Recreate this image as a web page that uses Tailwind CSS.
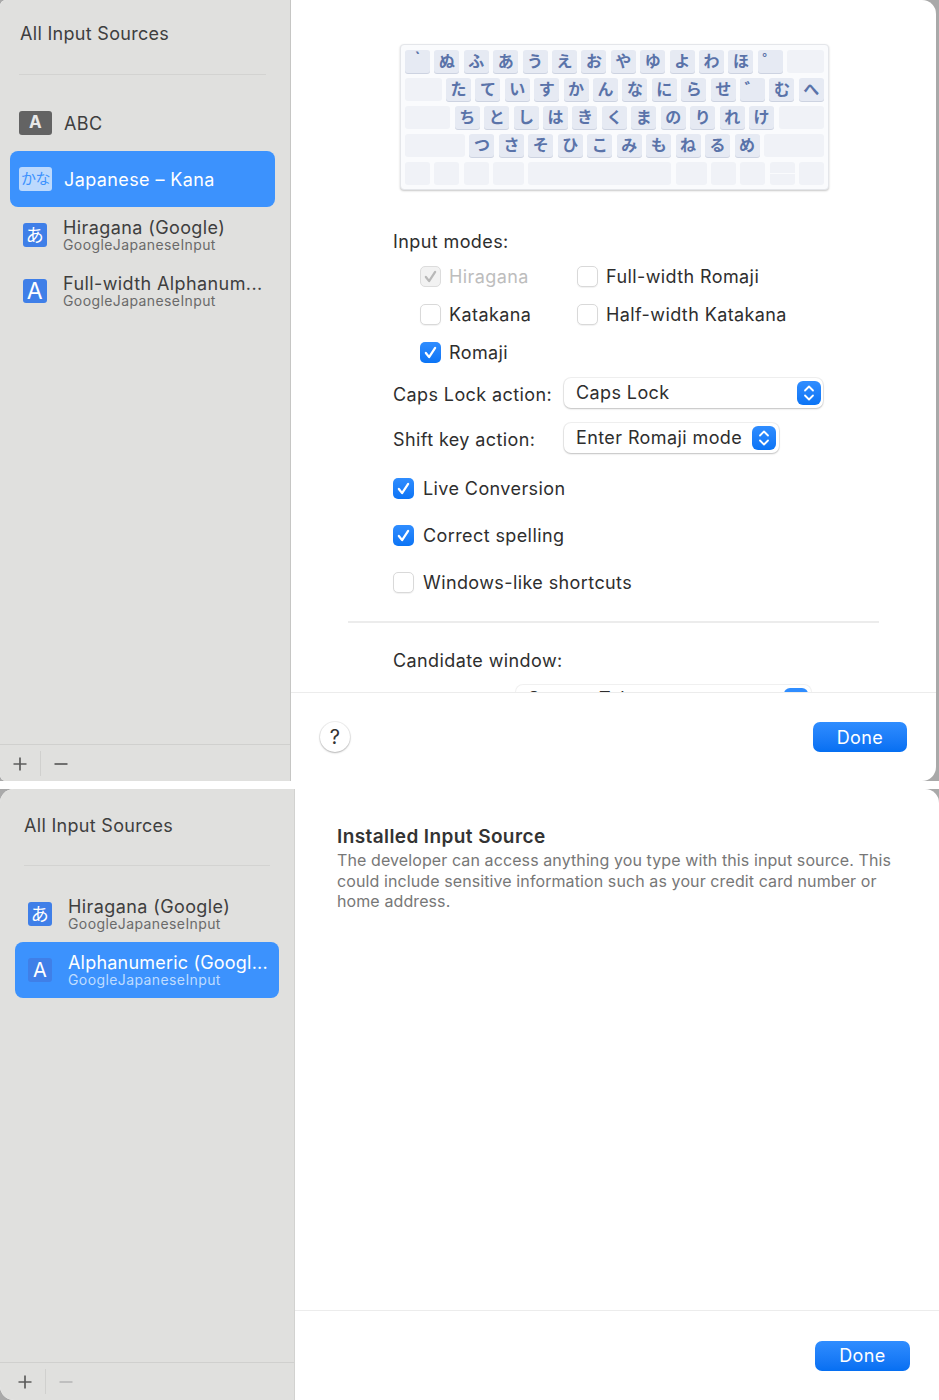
<!doctype html>
<html lang="en">
<head>
<meta charset="utf-8">
<title>Input Sources</title>
<script src="https://cdn.jsdelivr.net/npm/@tailwindcss/browser@4"></script>
</head>
<body class="bg-white font-['Inter','Noto_Sans_CJK_JP',sans-serif] text-[18px] tracking-[0.4px] text-[#2e2e2e] antialiased">

<!-- first sheet -->
<section class="h-[781px] bg-[#a9a9a9] pr-[3px]">
  <div class="flex h-full rounded-l-[6px] rounded-r-[14px] overflow-hidden bg-white">
    <aside class="flex w-[291px] shrink-0 flex-col border-r border-[#c6c6c4] bg-[#e0e0de]">
      <div class="flex h-[74px] items-center pb-[7px] pl-5 tracking-[0.3px] text-[#3e3e3e]">All Input Sources</div>
      <div class="ml-[19px] mr-[24px] h-px bg-[#d3d3d1]"></div>
      <ul class="flex-1 pl-[10px] pr-[15px] pt-[20px]">
        <li class="flex h-[56px] items-center pl-[9px]">
          <span class="flex h-[24px] w-[33px] items-center justify-center rounded-[3px] bg-[#636363] text-[17px] font-bold text-[#e8e8e8]">A</span>
          <span class="ml-[12px] text-[#3e3e3e]">ABC</span>
        </li>
        <li class="flex h-[56px] items-center rounded-[8px] bg-[#3c92fd] pl-[9px] text-white">
          <span class="flex h-[24px] w-[33px] items-center justify-center rounded-[3px] bg-[#bcd9fd] text-[15px] tracking-[-0.5px] text-[#3c92fd]">かな</span>
          <span class="ml-[12px]">Japanese – Kana</span>
        </li>
        <li class="flex h-[56px] items-center pl-[13px]">
          <span class="flex h-[24px] w-[24px] items-center justify-center rounded-[3px] bg-[#3f7fe8] text-[18px] text-white">あ</span>
          <div class="ml-[16px] text-[#3e3e3e]">
            <div class="text-[18px] leading-[20px]">Hiragana (Google)</div>
            <div class="text-[14px] leading-[14px] text-[#6a6a6a]">GoogleJapaneseInput</div>
          </div>
        </li>
        <li class="flex h-[56px] items-center pl-[13px]">
          <span class="flex h-[24px] w-[24px] items-center justify-center rounded-[3px] bg-[#3f7fe8] text-[23px] text-white">A</span>
          <div class="ml-[16px] text-[#3e3e3e]">
            <div class="text-[18px] leading-[20px]">Full-width Alphanum...</div>
            <div class="text-[14px] leading-[14px] text-[#6a6a6a]">GoogleJapaneseInput</div>
          </div>
        </li>
      </ul>
      <div class="flex h-[37px] items-center border-t border-[#d0d0ce] pl-[13px] pt-[1px]">
        <svg class="h-[14px] w-[14px]" viewBox="0 0 14 14" fill="none" stroke="#5c5c5c" stroke-width="1.7"><path d="M7 0.5v13M0.5 7h13"/></svg>
        <span class="ml-[13px] h-[25px] w-px bg-[#d0d0ce]"></span>
        <svg class="ml-[13px] h-[14px] w-[14px]" viewBox="0 0 14 14" fill="none" stroke="#5c5c5c" stroke-width="1.7"><path d="M0.5 7h13"/></svg>
      </div>
    </aside>

    <main class="flex min-w-0 flex-1 flex-col">
      <div class="h-[693px] overflow-hidden border-b border-[#ececec]">
        <!-- keyboard -->
        <div class="ml-[109px] mt-[44px] flex h-[146px] w-[429px] flex-col gap-[4.6px] rounded-[4px] border border-[#e4e6ea] bg-[#fafbfd] px-[4px] py-[4.6px] tracking-normal shadow-[0_1px_2px_rgba(0,0,0,0.22)] [&_b]:flex [&_b]:h-[23.4px] [&_b]:w-[25px] [&_b]:shrink-0 [&_b]:items-center [&_b]:justify-center [&_b]:rounded-[3px] [&_b]:bg-[#e6eaf3] [&_b]:text-[16px] [&_b]:font-bold [&_b]:text-[#5a73a9] [&_b]:shadow-[0_1px_0_#cdd3e1] [&_i]:block [&_i]:h-[23.4px] [&_i]:rounded-[3px] [&_i]:bg-[#f0f2f7]">
          <div class="flex justify-between"><b class="pb-[6px]">`</b><b>ぬ</b><b>ふ</b><b>あ</b><b>う</b><b>え</b><b>お</b><b>や</b><b>ゆ</b><b>よ</b><b>わ</b><b>ほ</b><b>゜</b><i class="w-[36.6px]"></i></div>
          <div class="flex justify-between"><i class="w-[36.6px]"></i><b>た</b><b>て</b><b>い</b><b>す</b><b>か</b><b>ん</b><b>な</b><b>に</b><b>ら</b><b>せ</b><b>゛</b><b>む</b><b>へ</b></div>
          <div class="flex justify-between"><i class="w-[45.3px]"></i><b>ち</b><b>と</b><b>し</b><b>は</b><b>き</b><b>く</b><b>ま</b><b>の</b><b>り</b><b>れ</b><b>け</b><i class="w-[45.3px]"></i></div>
          <div class="flex justify-between"><i class="w-[60px]"></i><b>つ</b><b>さ</b><b>そ</b><b>ひ</b><b>こ</b><b>み</b><b>も</b><b>ね</b><b>る</b><b>め</b><i class="w-[60px]"></i></div>
          <div class="flex justify-between">
            <i class="w-[25px]"></i><i class="w-[25px]"></i><i class="w-[25px]"></i><i class="w-[31px]"></i><i class="w-[143px]"></i><i class="w-[31px]"></i><i class="w-[25px]"></i><i class="w-[25px]"></i>
            <span class="flex w-[25px] flex-col gap-px"><span class="h-[11.2px] rounded-t-[3px] bg-[#f0f2f7]"></span><span class="h-[11.2px] rounded-b-[3px] bg-[#f0f2f7]"></span></span>
            <i class="w-[25px]"></i>
          </div>
        </div>

        <div class="pl-[102px]">
          <div class="mt-[41px] h-[22px] leading-[22px]">Input modes:</div>

          <div class="mt-[12px] flex h-[22px] items-center">
            <span class="ml-[27px] flex h-[21px] w-[21px] items-center justify-center rounded-[5px] border border-[#dcdcdc] bg-[#f2f2f2]">
              <svg class="h-[13px] w-[13px]" viewBox="0 0 14 14" fill="none" stroke="#b8b8b8" stroke-width="2.4" stroke-linecap="round" stroke-linejoin="round"><path d="M2 7.5 5.5 12 12 2"/></svg>
            </span>
            <span class="ml-[8px] w-[128px] text-[#bdbdbd]">Hiragana</span>
            <span class="h-[21px] w-[21px] rounded-[5px] border border-[#d9d9d9] bg-white shadow-[0_1px_1px_rgba(0,0,0,0.06)]"></span>
            <span class="ml-[8px]">Full-width Romaji</span>
          </div>
          <div class="mt-[16px] flex h-[22px] items-center">
            <span class="ml-[27px] h-[21px] w-[21px] rounded-[5px] border border-[#d9d9d9] bg-white shadow-[0_1px_1px_rgba(0,0,0,0.06)]"></span>
            <span class="ml-[8px] w-[128px]">Katakana</span>
            <span class="h-[21px] w-[21px] rounded-[5px] border border-[#d9d9d9] bg-white shadow-[0_1px_1px_rgba(0,0,0,0.06)]"></span>
            <span class="ml-[8px]">Half-width Katakana</span>
          </div>
          <div class="mt-[16px] flex h-[22px] items-center">
            <span class="ml-[27px] flex h-[21px] w-[21px] items-center justify-center rounded-[5px] bg-gradient-to-b from-[#2f8dff] to-[#0a74f5]">
              <svg class="h-[13px] w-[13px]" viewBox="0 0 14 14" fill="none" stroke="#fff" stroke-width="2.4" stroke-linecap="round" stroke-linejoin="round"><path d="M2 7.5 5.5 12 12 2"/></svg>
            </span>
            <span class="ml-[8px]">Romaji</span>
          </div>

          <div class="mt-[15px] flex h-[30px] items-center">
            <span class="w-[170px] pt-[2px]">Caps Lock action:</span>
            <div class="ml-[1px] flex h-[30px] w-[259px] items-center justify-between rounded-[7px] bg-white pl-[12px] pr-[2px] shadow-[0_0_0_1px_rgba(0,0,0,0.06),0_1px_2px_rgba(0,0,0,0.2)]">
              <span class="pb-[1px]">Caps Lock</span>
              <span class="flex h-[24px] w-[24px] items-center justify-center rounded-[6px] bg-gradient-to-b from-[#2f8dff] to-[#0a74f5]">
                <svg class="h-[18px] w-[12px]" viewBox="0 0 12 18" fill="none" stroke="#fff" stroke-width="1.8" stroke-linecap="round" stroke-linejoin="round"><path d="M2 6.5 6 2.5l4 4M2 11.5l4 4 4-4"/></svg>
              </span>
            </div>
          </div>
          <div class="mt-[15px] flex h-[30px] items-center">
            <span class="w-[170px] pt-[2px]">Shift key action:</span>
            <div class="ml-[1px] flex h-[30px] w-[215px] items-center justify-between rounded-[7px] bg-white pl-[12px] pr-[3px] shadow-[0_0_0_1px_rgba(0,0,0,0.06),0_1px_2px_rgba(0,0,0,0.2)]">
              <span class="pb-[1px]">Enter Romaji mode</span>
              <span class="flex h-[24px] w-[24px] items-center justify-center rounded-[6px] bg-gradient-to-b from-[#2f8dff] to-[#0a74f5]">
                <svg class="h-[18px] w-[12px]" viewBox="0 0 12 18" fill="none" stroke="#fff" stroke-width="1.8" stroke-linecap="round" stroke-linejoin="round"><path d="M2 6.5 6 2.5l4 4M2 11.5l4 4 4-4"/></svg>
              </span>
            </div>
          </div>

          <div class="mt-[24px] flex h-[22px] items-center">
            <span class="flex h-[21px] w-[21px] items-center justify-center rounded-[5px] bg-gradient-to-b from-[#2f8dff] to-[#0a74f5]">
              <svg class="h-[13px] w-[13px]" viewBox="0 0 14 14" fill="none" stroke="#fff" stroke-width="2.4" stroke-linecap="round" stroke-linejoin="round"><path d="M2 7.5 5.5 12 12 2"/></svg>
            </span>
            <span class="ml-[9px]">Live Conversion</span>
          </div>
          <div class="mt-[25px] flex h-[22px] items-center">
            <span class="flex h-[21px] w-[21px] items-center justify-center rounded-[5px] bg-gradient-to-b from-[#2f8dff] to-[#0a74f5]">
              <svg class="h-[13px] w-[13px]" viewBox="0 0 14 14" fill="none" stroke="#fff" stroke-width="2.4" stroke-linecap="round" stroke-linejoin="round"><path d="M2 7.5 5.5 12 12 2"/></svg>
            </span>
            <span class="ml-[9px]">Correct spelling</span>
          </div>
          <div class="mt-[25px] flex h-[22px] items-center">
            <span class="h-[21px] w-[21px] rounded-[5px] border border-[#d9d9d9] bg-white shadow-[0_1px_1px_rgba(0,0,0,0.06)]"></span>
            <span class="ml-[9px]">Windows-like shortcuts</span>
          </div>
        </div>

        <div class="ml-[57px] mt-[28px] h-[2px] w-[531px] bg-[#ececec]"></div>

        <div class="pl-[102px]">
          <div class="mt-[27px] h-[22px] leading-[22px]">Candidate window:</div>
          <div class="ml-[123px] mt-[13px] flex h-[30px] w-[295px] justify-between rounded-[7px] bg-white pl-[12px] pr-[3px] pt-[3px] shadow-[0_0_0_1px_rgba(0,0,0,0.06)]">
            <span class="leading-[21px]">Spaces Tab</span>
            <span class="h-[24px] w-[24px] rounded-[6px] bg-[#2f8dff]"></span>
          </div>
        </div>
      </div>
      <div class="flex flex-1 items-center justify-between pl-[29px] pr-[29px]">
        <span class="flex h-[30px] w-[30px] items-center justify-center rounded-full bg-white text-[20px] text-[#333] shadow-[0_0_0_1px_rgba(0,0,0,0.06),0_1px_2px_rgba(0,0,0,0.25)]">?</span>
        <button class="h-[30px] w-[94px] rounded-[7px] bg-gradient-to-b from-[#2f8dff] to-[#056ff2] text-[18px] text-white">Done</button>
      </div>
    </main>
  </div>
</section>

<div class="h-[8px]"></div>

<!-- second sheet -->
<section class="h-[611px] bg-[#a9a9a9]">
  <div class="flex h-full overflow-hidden rounded-tl-[14px] rounded-tr-[14px] rounded-bl-[14px] bg-white">
    <aside class="flex w-[295px] shrink-0 flex-col border-r border-[#d2d2d0] bg-[#e0e0de]">
      <div class="flex h-[76px] items-center pb-[4px] pl-6 tracking-[0.3px] text-[#3e3e3e]">All Input Sources</div>
      <div class="mx-[24px] h-px bg-[#d3d3d1]"></div>
      <ul class="flex-1 px-[15px] pt-[20px]">
        <li class="flex h-[56px] items-center pl-[13px]">
          <span class="flex h-[24px] w-[24px] items-center justify-center rounded-[3px] bg-[#3f7fe8] text-[18px] text-white">あ</span>
          <div class="ml-[16px] text-[#3e3e3e]">
            <div class="text-[18px] leading-[20px]">Hiragana (Google)</div>
            <div class="text-[14px] leading-[14px] text-[#6a6a6a]">GoogleJapaneseInput</div>
          </div>
        </li>
        <li class="flex h-[56px] items-center rounded-[8px] bg-[#3c92fd] pl-[13px] text-white">
          <span class="flex h-[24px] w-[24px] items-center justify-center rounded-[3px] bg-[#3f7fe8] text-[20px] text-white">A</span>
          <div class="ml-[16px]">
            <div class="text-[18px] leading-[20px] tracking-[0.2px]">Alphanumeric (Googl...</div>
            <div class="text-[14px] leading-[14px] text-[#bfdcff]">GoogleJapaneseInput</div>
          </div>
        </li>
      </ul>
      <div class="flex h-[38px] items-center border-t border-[#d0d0ce] pl-[18px]">
        <svg class="h-[14px] w-[14px]" viewBox="0 0 14 14" fill="none" stroke="#5c5c5c" stroke-width="1.7"><path d="M7 0.5v13M0.5 7h13"/></svg>
        <span class="ml-[13px] h-[25px] w-px bg-[#d0d0ce]"></span>
        <svg class="ml-[13px] h-[14px] w-[14px]" viewBox="0 0 14 14" fill="none" stroke="#b4b4b4" stroke-width="1.7"><path d="M0.5 7h13"/></svg>
      </div>
    </aside>

    <main class="flex min-w-0 flex-1 flex-col">
      <div class="h-[522px] border-b border-[#ececec] pl-[42px] pr-[40px] pt-[37px]">
        <h2 class="text-[19px] font-semibold leading-[22px] text-[#333]">Installed Input Source</h2>
        <p class="mt-[2px] text-[16px] leading-[20.5px] tracking-[0.1px] text-[#777]">The developer can access anything you type with this input source. This could include sensitive information such as your credit card number or home address.</p>
      </div>
      <div class="flex flex-1 items-center justify-end pr-[29px]">
        <button class="h-[30px] w-[95px] rounded-[7px] bg-gradient-to-b from-[#2f8dff] to-[#056ff2] text-[18px] text-white">Done</button>
      </div>
    </main>
  </div>
</section>

</body>
</html>
